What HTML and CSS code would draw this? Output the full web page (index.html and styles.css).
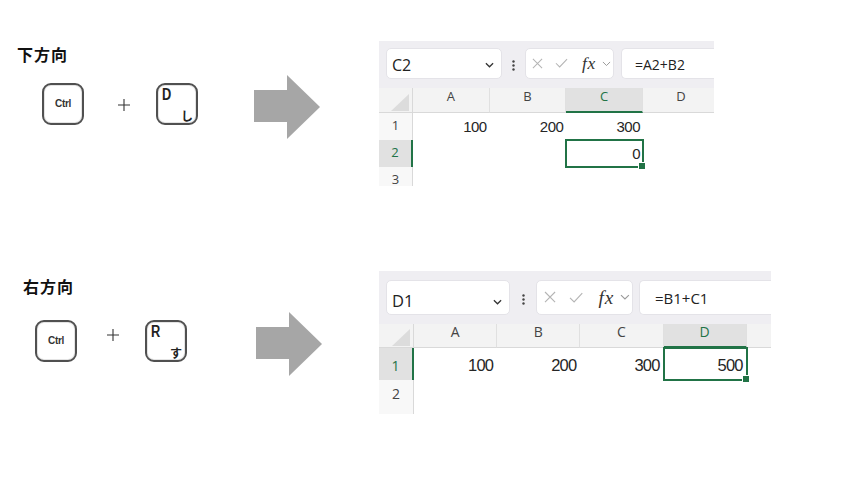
FILE: index.html
```html
<!DOCTYPE html>
<html lang="ja">
<head>
<meta charset="utf-8">
<title>ショートカット</title>
<link rel="stylesheet" href="styles.css">
</head>
<body>
<main class="page">
  <section class="demo demo--down">
    <div class="shortcut">
      <h2 class="shortcut__title">下方向</h2>
      <div class="combo">
        <div class="key key--mod"><span>Ctrl</span></div>
        <svg class="combo__plus" viewBox="0 0 12 12"><path d="M6 0V12M0 6H12" stroke="#333" stroke-width="1.1" fill="none"/></svg>
        <div class="key key--char"><span class="key__latin">D</span><span class="key__kana">し</span></div>
      </div>
    </div>
    <svg class="arrow" viewBox="0 0 66 64"><polygon points="0,15 33,15 33,0 66,32 33,64 33,47 0,47" fill="#a6a6a6"/></svg>
    <div class="sheet sheet--small">
      <div class="formula-bar">
        <div class="name-box"><span>C2</span><svg class="chev chev--dark" viewBox="0 0 10 6"><polyline points="1,1 5,5 9,1" fill="none" stroke="#333" stroke-width="1.4"/></svg></div>
        <div class="bar-dots"><svg viewBox="0 0 3 11"><circle cx="1.5" cy="1.5" r="1.2" fill="#444"/><circle cx="1.5" cy="5.5" r="1.2" fill="#444"/><circle cx="1.5" cy="9.5" r="1.2" fill="#444"/></svg></div>
        <div class="fx-box">
          <svg class="i-x" viewBox="0 0 12 12"><path d="M1 1L11 11M11 1L1 11" stroke="#b4b4b4" stroke-width="1.1" fill="none"/></svg>
          <svg class="i-check" viewBox="0 0 14 11"><polyline points="1,5.5 5,9.5 13,1" stroke="#b4b4b4" stroke-width="1.1" fill="none"/></svg>
          <span class="fx">fx</span>
          <svg class="chev chev--light" viewBox="0 0 10 6"><polyline points="1,1 5,5 9,1" fill="none" stroke="#9a9a9a" stroke-width="1.1"/></svg>
        </div>
        <div class="formula-input">=A2+B2</div>
      </div>
      <div class="grid">
        <div class="corner"><span class="corner__tri"></span></div>
        <div class="col-head">A</div>
        <div class="col-head">B</div>
        <div class="col-head col-head--active">C</div>
        <div class="col-head">D</div>
        <div class="col-head"></div>

        <div class="row-head">1</div>
        <div class="cell">100</div>
        <div class="cell">200</div>
        <div class="cell">300</div>
        <div class="cell"></div>
        <div class="cell"></div>

        <div class="row-head row-head--active">2</div>
        <div class="cell"></div>
        <div class="cell"></div>
        <div class="cell cell--selected">0</div>
        <div class="cell"></div>
        <div class="cell"></div>

        <div class="row-head">3</div>
        <div class="cell"></div>
        <div class="cell"></div>
        <div class="cell"></div>
        <div class="cell"></div>
        <div class="cell"></div>
      </div>
    </div>
  </section>

  <section class="demo demo--right">
    <div class="shortcut">
      <h2 class="shortcut__title">右方向</h2>
      <div class="combo">
        <div class="key key--mod"><span>Ctrl</span></div>
        <svg class="combo__plus" viewBox="0 0 12 12"><path d="M6 0V12M0 6H12" stroke="#333" stroke-width="1.1" fill="none"/></svg>
        <div class="key key--char"><span class="key__latin">R</span><span class="key__kana">す</span></div>
      </div>
    </div>
    <svg class="arrow" viewBox="0 0 66 64"><polygon points="0,15 33,15 33,0 66,32 33,64 33,47 0,47" fill="#a6a6a6"/></svg>
    <div class="sheet sheet--large">
      <div class="formula-bar">
        <div class="name-box"><span>D1</span><svg class="chev chev--dark" viewBox="0 0 10 6"><polyline points="1,1 5,5 9,1" fill="none" stroke="#333" stroke-width="1.4"/></svg></div>
        <div class="bar-dots"><svg viewBox="0 0 3 11"><circle cx="1.5" cy="1.5" r="1.2" fill="#444"/><circle cx="1.5" cy="5.5" r="1.2" fill="#444"/><circle cx="1.5" cy="9.5" r="1.2" fill="#444"/></svg></div>
        <div class="fx-box">
          <svg class="i-x" viewBox="0 0 12 12"><path d="M1 1L11 11M11 1L1 11" stroke="#b4b4b4" stroke-width="1.1" fill="none"/></svg>
          <svg class="i-check" viewBox="0 0 14 11"><polyline points="1,5.5 5,9.5 13,1" stroke="#b4b4b4" stroke-width="1.1" fill="none"/></svg>
          <span class="fx">fx</span>
          <svg class="chev chev--light" viewBox="0 0 10 6"><polyline points="1,1 5,5 9,1" fill="none" stroke="#9a9a9a" stroke-width="1.1"/></svg>
        </div>
        <div class="formula-input">=B1+C1</div>
      </div>
      <div class="grid">
        <div class="corner"><span class="corner__tri"></span></div>
        <div class="col-head">A</div>
        <div class="col-head">B</div>
        <div class="col-head">C</div>
        <div class="col-head col-head--active">D</div>
        <div class="col-head"></div>

        <div class="row-head row-head--active">1</div>
        <div class="cell">100</div>
        <div class="cell">200</div>
        <div class="cell">300</div>
        <div class="cell cell--selected">500</div>
        <div class="cell"></div>

        <div class="row-head">2</div>
        <div class="cell"></div>
        <div class="cell"></div>
        <div class="cell"></div>
        <div class="cell"></div>
        <div class="cell"></div>

        <div class="row-head"></div>
        <div class="cell"></div>
        <div class="cell"></div>
        <div class="cell"></div>
        <div class="cell"></div>
        <div class="cell"></div>
      </div>
    </div>
  </section>
</main>
</body>
</html>
```

FILE: styles.css
```css
* { box-sizing: border-box; }

body {
  margin: 0;
  background: #fff;
  color: #222;
  font-family: "Open Sans", "Noto Sans", "Noto Sans CJK JP", sans-serif;
}

.page { padding-top: 41px; }

.demo {
  display: flex;
  align-items: flex-start;
}

.demo--down {
  --sc-w: 254px;
  --sc-pad-top: 3px;
  --sc-pad-left: 17px;
  --combo-top: 19px;
  --combo-left: 25px;
  --plus-l: 34px;
  --plus-top: 16px;
  --arrow-top: 34px;
  --sheet-left: 59px;
}

.demo--right {
  margin-top: 85px;
  --sc-w: 256px;
  --sc-pad-top: 5px;
  --sc-pad-left: 23px;
  --combo-top: 24px;
  --combo-left: 12px;
  --plus-l: 30px;
  --plus-top: 9px;
  --arrow-top: 41px;
  --sheet-left: 57px;
}

/* ---------- shortcut keys ---------- */
.shortcut {
  flex: 0 0 var(--sc-w);
  padding: var(--sc-pad-top) 0 0 var(--sc-pad-left);
}

.shortcut__title {
  margin: 0;
  font: 700 16px/20px "Noto Sans CJK JP", sans-serif;
  letter-spacing: 1px;
  color: #111;
}

.combo {
  display: flex;
  align-items: flex-start;
  margin-top: var(--combo-top);
  padding-left: var(--combo-left);
}

.key {
  flex: 0 0 42px;
  width: 42px;
  height: 42px;
  border: 2px solid #505050;
  border-radius: 9px;
  background: #fff;
  box-shadow: inset 0 0 0 1px #e4e4e4;
}

.key--mod {
  display: flex;
  align-items: center;
  justify-content: center;
  font: 700 10px/10px "Liberation Sans", sans-serif;
  letter-spacing: -0.3px;
  color: #333;
}

.key--char {
  display: flex;
  flex-direction: column;
  justify-content: space-between;
  padding: 1px 3px 1px 4px;
}

.key__latin {
  align-self: flex-start;
  font: 700 16px/17px "Liberation Sans", sans-serif;
  color: #222;
  transform: scaleX(0.8);
  transform-origin: left center;
}

.key__kana {
  align-self: flex-end;
  font: 700 12px/13px "Noto Sans CJK JP", sans-serif;
  color: #222;
}

.combo__plus {
  flex: 0 0 12px;
  width: 12px;
  height: 12px;
  margin: var(--plus-top) 26px 0 var(--plus-l);
}

/* ---------- arrow ---------- */
.arrow {
  flex: 0 0 66px;
  width: 66px;
  height: 64px;
  margin-top: var(--arrow-top);
}

/* ---------- spreadsheet ---------- */
.sheet {
  flex: 0 0 auto;
  margin-left: var(--sheet-left);
  width: var(--sheet-w);
  height: var(--sheet-h);
  overflow: hidden;
  background: #fff;
}

.sheet--small {
  --sheet-w: 335px;
  --sheet-h: 145px;
  --fb-h: 47px;
  --fb-pad: 7px;
  --box-h: 31px;
  --nb-w: 116px;
  --nb-fs: 16px;
  --nb-pt: 3px;
  --dots-w: 23px;
  --fx-w: 89px;
  --fx-fs: 10px;
  --fi-gap: 7px;
  --fi-fs: 14px;
  --fi-pl: 13px;
  --rh-w: 34px;
  --col-w: 76.7px;
  --hdr-h: 25px;
  --r1: 27px;
  --r2: 27px;
  --r3: 27px;
  --hd-fs: 13px;
  --rn-fs: 13px;
  --rn-pb: 8px;
  --cell-fs: 15px;
  --cell-ls: -0.5px;
  --cell-pr: 3px;
  --cell-pb: 6px;
}

.sheet--large {
  --sheet-w: 392px;
  --sheet-h: 143px;
  --fb-h: 53px;
  --fb-pad: 9px;
  --box-h: 35px;
  --nb-w: 124px;
  --nb-fs: 16.5px;
  --nb-pt: 8px;
  --dots-w: 26px;
  --fx-w: 97px;
  --fx-fs: 11px;
  --fi-gap: 6px;
  --fi-fs: 15px;
  --fi-pl: 15px;
  --rh-w: 35px;
  --col-w: 83.2px;
  --hdr-h: 24px;
  --r1: 32px;
  --r2: 28px;
  --r3: 28px;
  --hd-fs: 14px;
  --rn-fs: 14px;
  --rn-pb: 7.5px;
  --cell-fs: 16.5px;
  --cell-ls: -0.8px;
  --cell-pr: 4px;
  --cell-pb: 6.5px;
}

.formula-bar {
  display: flex;
  align-items: flex-start;
  height: var(--fb-h);
  padding: var(--fb-pad) 0 0 7px;
  background: #efeef2;
}

.name-box {
  flex: 0 0 var(--nb-w);
  height: var(--box-h);
  display: flex;
  align-items: center;
  justify-content: space-between;
  padding: var(--nb-pt) 7px 0 5px;
  background: #fff;
  border: 1px solid #e4e3e8;
  border-radius: 5px;
  font-size: var(--nb-fs);
  line-height: 1;
  color: #222;
}

.chev--dark {
  width: 9px;
  height: 6px;
}

.bar-dots {
  flex: 0 0 var(--dots-w);
  height: var(--box-h);
  display: flex;
  align-items: center;
  justify-content: center;
  padding-top: 3px;
}

.bar-dots svg {
  width: 3px;
  height: 11px;
}

.fx-box {
  flex: 0 0 var(--fx-w);
  width: var(--fx-w);
  min-width: 0;
  height: var(--box-h);
  display: flex;
  align-items: center;
  padding-left: 0.6em;
  font-size: var(--fx-fs);
  background: #fff;
  border: 1px solid #e4e3e8;
  border-radius: 5px;
}

.i-x {
  flex: none;
  width: 1.1em;
  height: 1.1em;
}

.i-check {
  flex: none;
  width: 1.3em;
  height: 1.05em;
  margin-left: 1.2em;
}

.fx {
  margin-left: 0.8em;
  font: italic 1.75em/1 "Liberation Serif", serif;
  letter-spacing: 0.04em;
  color: #333;
}

.chev--light {
  flex: none;
  width: 0.9em;
  height: 0.55em;
  margin-left: 0.55em;
}

.formula-input {
  flex: 0 0 320px;
  margin-left: var(--fi-gap);
  height: var(--box-h);
  display: flex;
  align-items: center;
  padding: 1px 0 0 var(--fi-pl);
  background: #fff;
  border: 1px solid #e4e3e8;
  border-right: 0;
  border-radius: 5px 0 0 5px;
  font-size: var(--fi-fs);
  color: #222;
}

.grid {
  display: grid;
  grid-template-columns: var(--rh-w) repeat(5, var(--col-w));
  grid-template-rows: var(--hdr-h) var(--r1) var(--r2) var(--r3);
}

.corner {
  display: flex;
  justify-content: flex-end;
  align-items: flex-end;
  padding: 0 3px 1px 0;
  background: #f3f3f3;
  border-right: 1px solid #d9d9d9;
  border-bottom: 1px solid #d9d9d9;
}

.corner__tri {
  width: 18px;
  height: 17px;
  background: #dcdcdc;
  clip-path: polygon(100% 0, 100% 100%, 0 100%);
}

.col-head {
  display: flex;
  justify-content: center;
  align-items: flex-start;
  background: #f3f3f3;
  border-right: 1px solid #e0e0e0;
  border-bottom: 1px solid #d9d9d9;
  font-size: var(--hd-fs);
  line-height: 16px;
  color: #444;
}

.col-head--active {
  background: #e1e1e1;
  border-bottom: 2px solid #217346;
  color: #217346;
}

.row-head {
  display: flex;
  justify-content: center;
  align-items: flex-end;
  padding-bottom: var(--rn-pb);
  background: #f8f8f8;
  border-right: 1px solid #d9d9d9;
  font-size: var(--rn-fs);
  line-height: 1;
  color: #444;
}

.row-head--active {
  background: #e1e1e1;
  border-right: 2px solid #217346;
  color: #217346;
}

.cell {
  display: flex;
  justify-content: flex-end;
  align-items: flex-end;
  padding: 0 var(--cell-pr) var(--cell-pb) 0;
  font-family: "Liberation Sans", sans-serif;
  font-size: var(--cell-fs);
  line-height: 1;
  letter-spacing: var(--cell-ls);
  color: #262626;
  background: #fff;
}

.cell--selected { position: relative; }

.cell--selected::after {
  content: "";
  position: absolute;
  inset: -1px -1px -1px -1px;
  border: 2px solid #217346;
}

.cell--selected::before {
  content: "";
  position: absolute;
  right: -3px;
  bottom: -3px;
  width: 6px;
  height: 6px;
  background: #217346;
  border: 1px solid #fff;
  z-index: 1;
}
```
